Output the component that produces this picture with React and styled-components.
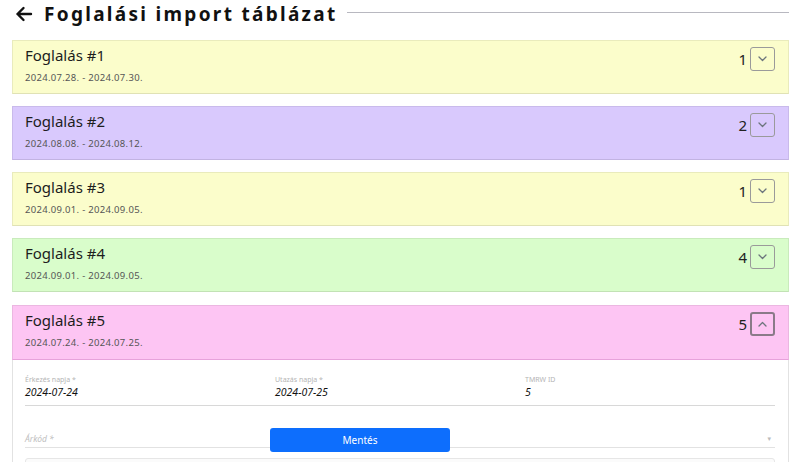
import React, { useState } from 'react';
import styled, { createGlobalStyle } from 'styled-components';

const GlobalStyle = createGlobalStyle`
    body {
        margin: 0;
        font-family: "Noto Sans", "DejaVu Sans", sans-serif;
        color: #212529;
        background: #fff;
    }
    * { box-sizing: border-box; }
`;

const bookings = [
    { id: 1, from: '2024.07.28.', to: '2024.07.30.', count: 1, color: '#fbfdcb' },
    { id: 2, from: '2024.08.08.', to: '2024.08.12.', count: 2, color: '#d9c9fd' },
    { id: 3, from: '2024.09.01.', to: '2024.09.05.', count: 1, color: '#fbfdcb' },
    { id: 4, from: '2024.09.01.', to: '2024.09.05.', count: 4, color: '#d9fdcb' },
    { id: 5, from: '2024.07.24.', to: '2024.07.25.', count: 5, color: '#fdc5f3' },
];

const Chevron = ({ up }) => (
    <svg width="9" height="6" viewBox="0 0 9 6" fill="none">
        <path
            d={up ? 'M1 5 L4.5 1.5 L8 5' : 'M1 1 L4.5 4.5 L8 1'}
            stroke="#6c757d"
            strokeWidth="1.3"
            strokeLinecap="round"
            strokeLinejoin="round"
        />
    </svg>
);

const App = () => {
    let [open, setOpen] = useState(5);

    return (
        <>
            <GlobalStyle />
            <Page>
                <Header>
                    <Back>
                        <svg width="18" height="16" viewBox="0 0 18 16" fill="none">
                            <path d="M16 8 H2.5 M8.5 2 L2.5 8 L8.5 14" stroke="#111" strokeWidth="2.4" strokeLinecap="round" strokeLinejoin="round" />
                        </svg>
                    </Back>
                    <Title>Foglalási import táblázat</Title>
                    <Rule />
                </Header>
                <List>
                    {bookings.map(b => (
                        <Card key={b.id} $open={open === b.id}>
                            <CardHead $bg={b.color} $open={open === b.id}>
                                <HeadText>
                                    <Name>Foglalás #{b.id}</Name>
                                    <Dates>{b.from} - {b.to}</Dates>
                                </HeadText>
                                <Count>{b.count}</Count>
                                <Toggle $active={open === b.id} onClick={() => setOpen(open === b.id ? null : b.id)}>
                                    <Chevron up={open === b.id} />
                                </Toggle>
                            </CardHead>
                            {open === b.id && (
                                <Body>
                                    <FieldRow>
                                        <Field>
                                            <Label>Érkezés napja *</Label>
                                            <Value>2024-07-24</Value>
                                        </Field>
                                        <Field>
                                            <Label>Utazás napja *</Label>
                                            <Value>2024-07-25</Value>
                                        </Field>
                                        <Field>
                                            <Label>TMRW ID</Label>
                                            <Value>5</Value>
                                        </Field>
                                    </FieldRow>
                                    <SelectField>
                                        <Placeholder>Árkód *</Placeholder>
                                        <Caret>▾</Caret>
                                    </SelectField>
                                    <Box />
                                </Body>
                            )}
                        </Card>
                    ))}
                </List>
                <Save>Mentés</Save>
            </Page>
        </>
    );
};

export default App;

let Page = styled.div`
    padding: 3px 11px 0 12px;
    height: 462px;
    overflow: hidden;
`

let Header = styled.div`
    display: flex;
    align-items: center;
    height: 22px;
    margin-bottom: 15px;
`

let Back = styled.div`
    display: flex;
    align-items: center;
    padding-left: 3px;
    margin-right: 11px;
`

let Title = styled.h1`
    margin: 0;
    font-size: 19px;
    font-weight: 700;
    letter-spacing: 2.3px;
    color: #111;
    white-space: nowrap;
`

let Rule = styled.div`
    flex: 1;
    height: 1px;
    background: #b8b8c0;
    margin-left: 9px;
    align-self: flex-start;
    margin-top: 9px;
`

let List = styled.div`
    display: flex;
    flex-direction: column;
    gap: 12px;
`

let Card = styled.div`
    display: flex;
    flex-direction: column;
    margin-top: ${p => p.$open ? '1px' : '0'};
`

let CardHead = styled.div`
    display: flex;
    align-items: flex-start;
    background: ${p => p.$bg};
    border: 1px solid rgba(0, 0, 0, 0.07);
    border-bottom-color: ${p => p.$open ? 'rgba(170, 60, 150, 0.25)' : 'rgba(0, 0, 0, 0.1)'};
    height: ${p => p.$open ? '55px' : '54px'};
    padding: 6px 13px 0 12px;
`

let HeadText = styled.div`
    flex: 1;
    display: flex;
    flex-direction: column;
    margin-top: -2px;
`

let Name = styled.div`
    font-size: 15px;
    line-height: 20px;
    color: #1d1d1d;
`

let Dates = styled.div`
    font-size: 9.5px;
    letter-spacing: 0.3px;
    color: #555;
    margin-top: 6px;
`

let Count = styled.div`
    font-size: 15px;
    font-weight: 400;
    margin-top: 2px;
    margin-right: 3px;
    color: #222;
`

let Toggle = styled.button`
    display: flex;
    align-items: center;
    justify-content: center;
    width: 25px;
    height: 24px;
    padding: 0;
    background: transparent;
    border: ${p => p.$active ? '2px solid #8a7a88' : '1px solid #9a9a9a'};
    border-radius: 3px;
    cursor: pointer;
`

let Body = styled.div`
    border: 1px solid #e2e2e2;
    border-top: none;
    padding: 15px 13px 0 12px;
    height: 120px;
`

let FieldRow = styled.div`
    display: grid;
    grid-template-columns: 250px 250px 1fr;
    border-bottom: 1px solid #d8d8d8;
    padding-bottom: 6px;
`

let Field = styled.div`
    display: flex;
    flex-direction: column;
`

let Label = styled.div`
    font-size: 7px;
    color: #b5b5b5;
    line-height: 10px;
`

let Value = styled.div`
    font-size: 10.5px;
    font-style: italic;
    color: #111;
    line-height: 14px;
`

let SelectField = styled.div`
    display: flex;
    justify-content: space-between;
    align-items: center;
    margin-top: 27px;
    padding-bottom: 3px;
    border-bottom: 1px solid #e2e2e2;
`

let Placeholder = styled.div`
    font-size: 8.5px;
    font-style: italic;
    color: #c0c0c0;
`

let Caret = styled.div`
    font-size: 7px;
    color: #bbb;
    padding-right: 4px;
`

let Box = styled.div`
    margin-top: 10px;
    height: 20px;
    border: 1px solid #e6e6e6;
    border-radius: 3px;
    background: #fbfbfb;
`

let Save = styled.button`
    position: fixed;
    left: 270px;
    top: 428px;
    width: 180px;
    height: 24px;
    background: #0d6efd;
    color: #fff;
    border: none;
    border-radius: 3px;
    font-family: "Noto Sans", sans-serif;
    font-size: 10px;
`
